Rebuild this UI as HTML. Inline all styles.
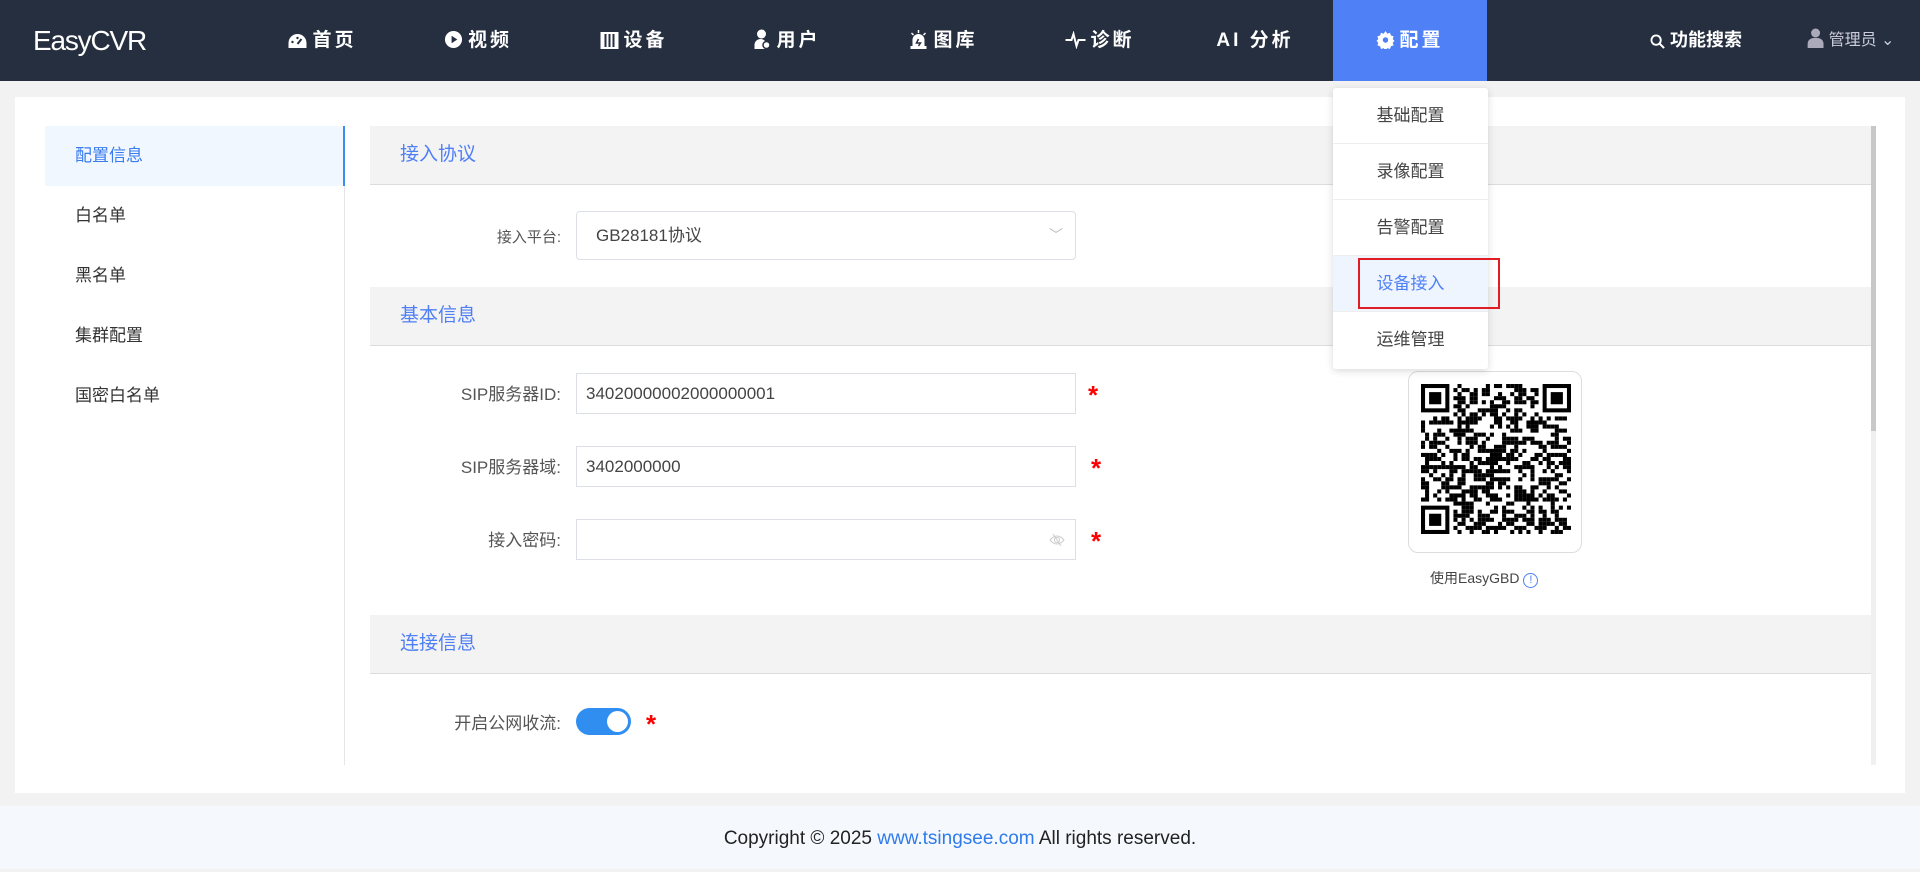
<!DOCTYPE html>
<html><head><meta charset="utf-8">
<style>
*{box-sizing:border-box;margin:0;padding:0}
body{width:1920px;height:869px;overflow:hidden;background:#f2f2f2;font-family:"Liberation Sans","Noto Sans CJK SC",sans-serif;color:#333;position:relative}
.hdr{position:absolute;left:0;top:0;width:1920px;height:81px;background:#262f3f}
.logo{position:absolute;left:33px;top:25px;color:#fff;font-size:28px;font-family:"Liberation Sans","Noto Sans CJK SC",sans-serif;letter-spacing:-1.2px}
.nav{position:absolute;top:0;height:81px;line-height:81px;color:#fff;font-weight:bold;font-size:19px;transform:translateX(-50%);white-space:nowrap;letter-spacing:3px}
.nav svg{vertical-align:-3px;margin-right:5px}
.act{position:absolute;left:1333px;top:0;width:154px;height:81px;background:#4f80f5}
.card{position:absolute;left:15px;top:97px;width:1890px;height:696px;background:#fff}
.foot{position:absolute;left:0;top:806px;width:1920px;height:63px;background:#f5f8fc;text-align:center;line-height:66px;font-size:19px;color:#222}
.foot a{color:#2f7bea;text-decoration:none}
.lm{position:absolute;left:45px;top:126px;width:300px}
.lm div{height:60px;line-height:60px;padding-left:30px;font-size:17px;color:#333}
.lm .on{background:#f0f7ff;color:#3a7cf0;border-right:2px solid #3a8cf0}
.vline{position:absolute;left:344px;top:186px;width:1px;height:579px;background:#e6e6e6}
.sec{position:absolute;left:370px;width:1501px;height:59px;background:#f3f3f3;border-bottom:1px solid #ddd;color:#4f7ff5;font-size:19px;line-height:58px;padding-left:30px}
.lbl{position:absolute;width:200px;left:361px;text-align:right;font-size:16px;color:#555}
.inp{position:absolute;left:576px;width:500px;height:41px;border:1px solid #dcdfe6;font-size:17px;line-height:39px;padding-left:9px;color:#444}
.star{position:absolute;color:#f00;font-size:26px;font-weight:bold}
.qr{position:absolute;left:1408px;top:371px;width:174px;height:182px;border:1px solid #ddd;border-radius:10px;background:#fff}
.dd{position:absolute;left:1333px;top:88px;width:155px;height:281px;background:#fff;box-shadow:0 2px 8px rgba(0,0,0,.15);border-radius:3px}
.dd div{height:56px;line-height:56px;text-align:center;font-size:17px;color:#444;border-bottom:1px solid #eee}
</style></head><body>
<div class="hdr">
<div class="logo">EasyCVR</div>
<div class="act"></div>
<div class="nav" style="left:322px"><svg width="20" height="16" viewBox="0 0 20 16"><path d="M10 1a9 9 0 0 0-9 9v5h18v-5a9 9 0 0 0-9-9z" fill="#fff"/><path d="M10 11l4-5" stroke="#262f3f" stroke-width="2"/><circle cx="5" cy="9" r="1.2" fill="#262f3f"/><circle cx="10" cy="5" r="1.2" fill="#262f3f"/></svg>首页</div>
<div class="nav" style="left:478px"><svg width="19" height="19" viewBox="0 0 20 20"><circle cx="10" cy="10" r="9" fill="#fff"/><path d="M8 6v8l6-4z" fill="#262f3f"/></svg>视频</div>
<div class="nav" style="left:634px"><svg width="18" height="17" viewBox="0 0 18 17"><rect x="0" y="0" width="18" height="17" fill="#fff"/><rect x="4" y="2" width="2" height="13" fill="#262f3f"/><rect x="8" y="2" width="2" height="13" fill="#262f3f"/><rect x="12" y="2" width="2" height="13" fill="#262f3f"/></svg>设备</div>
<div class="nav" style="left:787px"><svg width="18" height="20" viewBox="0 0 18 20"><circle cx="8" cy="5" r="4.5" fill="#fff"/><path d="M1 20v-4a6 6 0 0 1 12 0v4z" fill="#fff"/><circle cx="13" cy="16" r="3.5" fill="#fff" stroke="#262f3f" stroke-width="1.5"/></svg>用户</div>
<div class="nav" style="left:943px"><svg width="20" height="20" viewBox="0 0 20 20"><path d="M4 18v-7a6 6 0 0 1 12 0v7z" fill="#fff"/><rect x="2" y="17" width="16" height="3" fill="#fff"/><path d="M10 1v3M3 4l2 2M17 4l-2 2" stroke="#fff" stroke-width="1.5"/><path d="M10 10l-2 4h4l-2 3" stroke="#262f3f" stroke-width="1.5" fill="none"/></svg>图库</div>
<div class="nav" style="left:1100px"><svg width="20" height="18" viewBox="0 0 20 18"><path d="M0 9h6l2-6 3 12 2-6h7" stroke="#fff" stroke-width="2" fill="none"/></svg>诊断</div>
<div class="nav" style="left:1255px">AI 分析</div>
<div class="nav" style="left:1410px"><svg width="18" height="18" viewBox="0 0 20 20"><path d="M10 0l2 3 3-1 1 3 3 1-1 3 2 2-2 2 1 3-3 1-1 3-3-1-2 3-2-3-3 1-1-3-3-1 1-3-2-2 2-2-1-3 3-1 1-3 3 1z" fill="#fff"/><circle cx="10" cy="10" r="3" fill="#4f80f5"/></svg>配置</div>
<div class="nav" style="left:1696px;letter-spacing:0;font-size:18px"><svg width="15" height="15" viewBox="0 0 16 16"><circle cx="6.5" cy="6.5" r="5" stroke="#fff" stroke-width="2" fill="none"/><path d="M10 10l5 5" stroke="#fff" stroke-width="2.2"/></svg>功能搜索</div>
<div class="nav" style="left:1851px;font-weight:normal;letter-spacing:0;font-size:16px;color:#ccd"><svg width="16" height="20" viewBox="0 0 16 20"><circle cx="8" cy="5" r="4.5" fill="#aab"/><path d="M0 20v-4a6 6 0 0 1 6-6h4a6 6 0 0 1 6 6v4z" fill="#aab"/></svg>管理员 ⌄</div>
</div>
<div class="card"></div>
<div class="lm"><div class="on">配置信息</div><div>白名单</div><div>黑名单</div><div>集群配置</div><div>国密白名单</div></div>
<div class="vline"></div>
<div style="position:absolute;left:1871px;top:126px;width:5px;height:639px;background:#f0f0f0"></div>
<div style="position:absolute;left:1871px;top:126px;width:5px;height:305px;background:#c8c8c8"></div>
<div class="sec" style="top:126px">接入协议</div>
<div class="lbl" style="top:226px;font-size:15px">接入平台:</div>
<div class="inp" style="top:211px;height:49px;line-height:47px;border-radius:4px;padding-left:19px">GB28181协议<span style="position:absolute;right:12px;color:#bbb;font-size:14px">﹀</span></div>
<div class="sec" style="top:287px">基本信息</div>
<div class="lbl" style="top:380px;font-size:17px">SIP服务器ID:</div>
<div class="inp" style="top:373px">34020000002000000001</div>
<div class="star" style="left:1088px;top:380px">*</div>
<div class="lbl" style="top:453px;font-size:17px">SIP服务器域:</div>
<div class="inp" style="top:446px">3402000000</div>
<div class="star" style="left:1091px;top:453px">*</div>
<div class="lbl" style="top:526px;font-size:17px">接入密码:</div>
<div class="inp" style="top:519px"><svg style="position:absolute;right:10px;top:12px" width="16" height="16" viewBox="0 0 16 16"><path d="M1 8q7-8 14 0q-7 8-14 0z" stroke="#ccc" fill="none"/><circle cx="8" cy="8" r="2.5" stroke="#ccc" fill="none"/><path d="M4 2l8 12" stroke="#ccc"/></svg></div>
<div class="star" style="left:1091px;top:526px">*</div>
<div class="qr"><svg id="q" style="position:absolute;left:12px;top:12px" width="150" height="150" viewBox="0 0 37 37"></svg></div>
<div style="position:absolute;left:1430px;top:568px;font-size:14px;color:#444">使用EasyGBD <span style="display:inline-block;width:15px;height:15px;border:1px solid #4f80f5;border-radius:50%;color:#4f80f5;font-size:11px;line-height:13px;text-align:center">!</span></div>
<div class="sec" style="top:615px">连接信息</div>
<div class="lbl" style="top:709px;font-size:17px">开启公网收流:</div>
<div style="position:absolute;left:576px;top:708px;width:55px;height:27px;border-radius:14px;background:#2f8ef0"><div style="position:absolute;right:3px;top:3px;width:21px;height:21px;border-radius:50%;background:#fff"></div></div>
<div class="star" style="left:646px;top:709px">*</div>
<div class="dd"><div>基础配置</div><div>录像配置</div><div>告警配置</div><div style="background:#eef5ff;color:#4f80f5">设备接入</div><div style="border:none">运维管理</div></div>
<div style="position:absolute;left:1358px;top:258px;width:142px;height:51px;border:2px solid #e01c24"></div>
<div class="foot">Copyright © 2025 <a>www.tsingsee.com</a> All rights reserved.</div>
<script>
var s=document.getElementById('q'),h='',seed=7;
function r(){seed=(seed*1103515245+12345)&0x7fffffff;return seed/0x7fffffff}
function fin(x,y){return (x<8&&y<8)||(x>28&&y<8)||(x<8&&y>28)}
for(var y=0;y<37;y++)for(var x=0;x<37;x++){if(fin(x,y))continue;if(r()<0.5)h+='<rect x="'+x+'" y="'+y+'" width="1" height="1"/>'}
[[0,0],[30,0],[0,30]].forEach(function(p){h+='<rect x="'+(p[0]+.5)+'" y="'+(p[1]+.5)+'" width="6" height="6" fill="none" stroke="#000"/><rect x="'+(p[0]+2)+'" y="'+(p[1]+2)+'" width="3" height="3"/>'});
s.innerHTML=h;
</script>
</body></html>
